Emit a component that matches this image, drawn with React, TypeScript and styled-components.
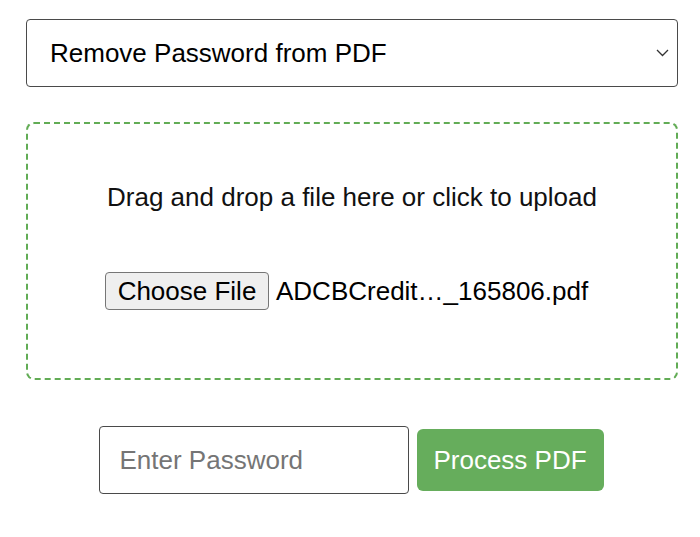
import React, { useState } from "react";
import styled, { createGlobalStyle } from "styled-components";

const GlobalStyle = createGlobalStyle`
  body {
    margin: 0;
    background: #ffffff;
    font-family: "Liberation Sans", Arial, sans-serif;
    color: #000;
  }
`;

const Page = styled.main`
  width: 652px;
  padding: 19px 0 0 26px;
  display: flex;
  flex-direction: column;
`;

const SelectWrap = styled.div`
  position: relative;
  width: 100%;
`;

const ToolSelect = styled.select`
  appearance: none;
  width: 100%;
  height: 68px;
  box-sizing: border-box;
  padding: 0 40px 0 23px;
  border: 1px solid #4a4a4a;
  border-radius: 4px;
  background: #fff;
  font-family: "Liberation Sans", Arial, sans-serif;
  font-size: 26px;
  color: #000;
  outline: none;
`;

const Chevron = styled.svg`
  position: absolute;
  right: 9px;
  top: 30px;
  pointer-events: none;
`;

const DropZone = styled.label`
  margin-top: 35px;
  height: 258px;
  box-sizing: border-box;
  border: 2.5px dashed #62ac55;
  border-radius: 8px;
  display: flex;
  flex-direction: column;
  align-items: center;
  padding-top: 57px;
  cursor: pointer;
`;

const Hint = styled.p`
  margin: 0;
  font-size: 26px;
  line-height: 32px;
  color: #111;
`;

const FileRow = styled.div`
  margin-top: 59px;
  width: 494px;
  display: flex;
  align-items: center;
  gap: 7px;
`;

const HiddenInput = styled.input`
  display: none;
`;

const ChooseButton = styled.span`
  display: inline-flex;
  align-items: center;
  justify-content: center;
  height: 38px;
  width: 164px;
  box-sizing: border-box;
  border: 1px solid #767676;
  border-radius: 4px;
  background: #efefef;
  font-size: 26px;
  color: #000;
`;

const FileName = styled.span`
  font-size: 26px;
  color: #000;
  white-space: nowrap;
`;

const ActionRow = styled.div`
  margin-top: 46px;
  padding-right: 2px;
  display: flex;
  justify-content: center;
  align-items: center;
  gap: 8px;
`;

const PasswordInput = styled.input`
  width: 310px;
  height: 68px;
  box-sizing: border-box;
  padding: 0 20px;
  border: 1px solid #4a4a4a;
  border-radius: 4px;
  font-family: "Liberation Sans", Arial, sans-serif;
  font-size: 26px;
  outline: none;
  &::placeholder {
    color: #757575;
  }
`;

const ProcessButton = styled.button`
  height: 62px;
  width: 187px;
  border: none;
  border-radius: 6px;
  background: #66ad5c;
  color: #fff;
  font-family: "Liberation Sans", Arial, sans-serif;
  font-size: 26px;
  cursor: pointer;
`;

function App() {
  const [tool, setTool] = useState("remove");
  const [password, setPassword] = useState("");

  return (
    <>
      <GlobalStyle />
      <Page>
        <SelectWrap>
          <ToolSelect value={tool} onChange={(e) => setTool(e.target.value)}>
            <option value="remove">Remove Password from PDF</option>
            <option value="add">Add Password to PDF</option>
          </ToolSelect>
          <Chevron width="13" height="8" viewBox="0 0 13 8">
            <path d="M1 1 L6.5 6.5 L12 1" fill="none" stroke="#333" strokeWidth="1.3" />
          </Chevron>
        </SelectWrap>
        <DropZone>
          <Hint>Drag and drop a file here or click to upload</Hint>
          <FileRow>
            <HiddenInput type="file" accept="application/pdf" />
            <ChooseButton>Choose File</ChooseButton>
            <FileName>ADCBCredit…_165806.pdf</FileName>
          </FileRow>
        </DropZone>
        <ActionRow>
          <PasswordInput
            type="password"
            placeholder="Enter Password"
            value={password}
            onChange={(e) => setPassword(e.target.value)}
          />
          <ProcessButton>Process PDF</ProcessButton>
        </ActionRow>
      </Page>
    </>
  );
}

export default App;
